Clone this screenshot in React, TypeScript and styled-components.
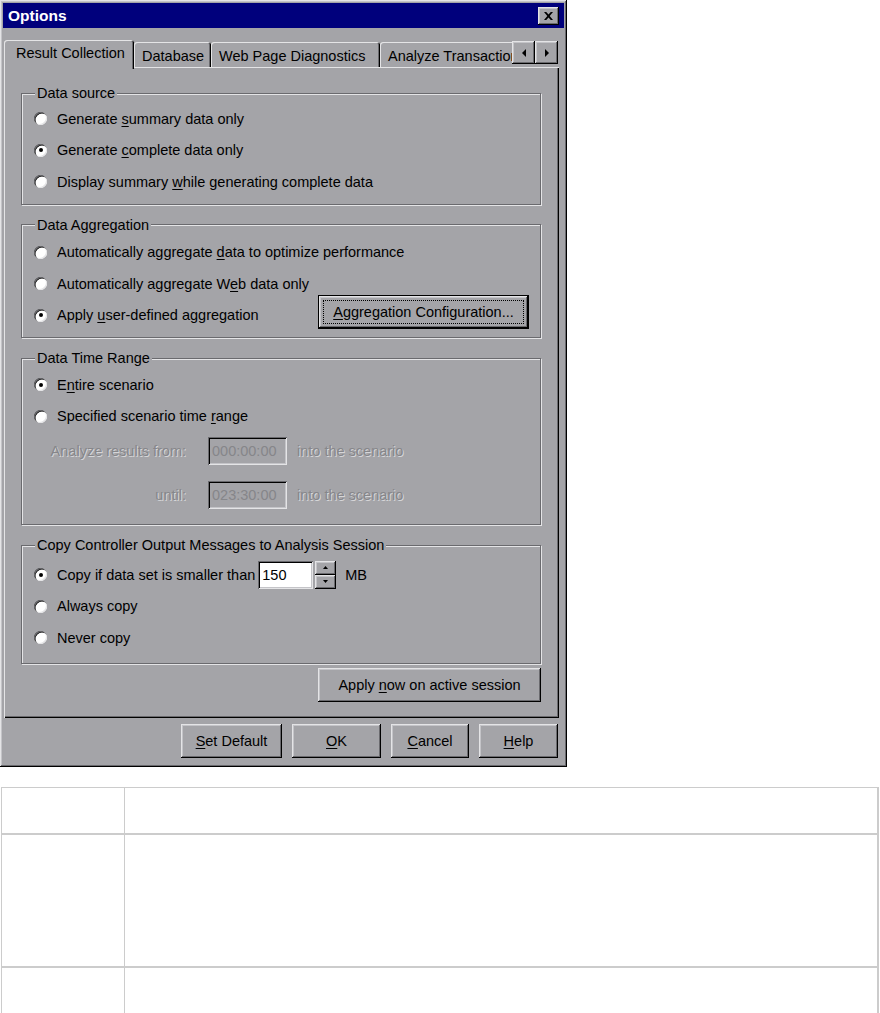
import React from "react";
import styled, { createGlobalStyle, css } from "styled-components";

const face = "#a4a4a8";
const hilite = "#e4e4e6";
const light = "#c4c4c8";
const shadow = "#6a6a6e";
const dark = "#000000";
const navy = "#00007c";

const GlobalStyle = createGlobalStyle`
  html, body {
    margin: 0;
    padding: 0;
    background: #ffffff;
  }
  body {
    font-family: "Liberation Sans", Arial, sans-serif;
    font-size: 14.5px;
    color: #000;
  }
  * {
    box-sizing: border-box;
  }
`;

const raised = css`
  box-shadow: inset -1px -1px 0 ${dark}, inset 1px 1px 0 ${hilite},
    inset -2px -2px 0 ${shadow}, inset 2px 2px 0 ${light};
`;

const sunken = css`
  box-shadow: inset 1px 1px 0 ${shadow}, inset -1px -1px 0 ${hilite},
    inset 2px 2px 0 ${dark}, inset -2px -2px 0 ${light};
`;

const Page = styled.div`
  display: flex;
  flex-direction: column;
  gap: 20px;
`;

const Window = styled.div`
  width: 567px;
  height: 767px;
  padding: 3px;
  background: ${face};
  ${raised};
  display: flex;
  flex-direction: column;
`;

const TitleBar = styled.div`
  flex: none;
  height: 25px;
  background: ${navy};
  display: flex;
  align-items: center;
  justify-content: space-between;
  padding: 0 5px;
`;

const Title = styled.span`
  color: #fff;
  font-weight: bold;
  font-size: 15.5px;
`;

const CloseButton = styled.button`
  width: 21px;
  height: 18px;
  padding: 0;
  border: 0;
  background: ${face};
  ${raised};
  display: flex;
  align-items: center;
  justify-content: center;
`;

const Body = styled.div`
  padding: 12px 5px 0 1px;
  display: flex;
  flex-direction: column;
`;

const TabStrip = styled.div`
  position: relative;
  z-index: 1;
  height: 27px;
  display: flex;
  align-items: flex-start;
`;

const TabsViewport = styled.div`
  width: 508px;
  height: 29px;
  overflow: hidden;
  display: flex;
  align-items: flex-end;
`;

const Tab = styled.div<{ $active?: boolean; $w: number }>`
  flex: none;
  width: ${(p) => p.$w}px;
  white-space: nowrap;
  display: flex;
  align-items: center;
  background: ${face};
  border-radius: 3px 3px 0 0;
  box-shadow: inset 1px 1px 0 ${hilite}, inset -1px 0 0 ${dark},
    inset -2px 0 0 ${shadow};
  ${(p) =>
    p.$active
      ? css`
          height: 29px;
          padding: 0 0 3px 12px;
        `
      : css`
          height: 25px;
          margin-bottom: 2px;
          padding: 3px 0 0 8px;
        `}
`;

const ScrollButton = styled.button`
  flex: none;
  width: 23px;
  height: 23px;
  margin-top: 1px;
  padding: 0;
  border: 0;
  background: ${face};
  ${raised};
  display: flex;
  align-items: center;
  justify-content: center;
`;

const Panel = styled.div`
  height: 651px;
  padding: 18px 18px 0 17px;
  background: ${face};
  box-shadow: inset 1px 1px 0 ${hilite}, inset -1px -1px 0 ${dark},
    inset -2px -2px 0 ${shadow};
  display: flex;
  flex-direction: column;
`;

const Group = styled.fieldset<{ $pt: number; $pb: number }>`
  margin: 0 0 12px;
  min-width: 0;
  padding: ${(p) => p.$pt}px 0 ${(p) => p.$pb}px 12px;
  border: 1px solid ${shadow};
  box-shadow: inset 1px 1px 0 ${hilite}, 1px 1px 0 ${hilite};
`;

const Legend = styled.legend`
  margin-left: 1px;
  padding: 0 2px;
  line-height: 16px;
  background: ${face};
`;

const Row = styled.div`
  height: 31.5px;
  display: flex;
  align-items: center;
  white-space: nowrap;
`;

const RadioMark = styled.span`
  flex: none;
  width: 13px;
  height: 13px;
  margin-right: 10px;
  border-radius: 50%;
  background: #fff;
  box-shadow: inset 1px 1px 0 ${shadow}, inset -1px -1px 0 ${hilite},
    inset 1.5px 1.5px 0 ${dark};
  display: flex;
  align-items: center;
  justify-content: center;
`;

const RadioDot = styled.span`
  width: 4px;
  height: 4px;
  border-radius: 50%;
  background: #000;
`;

const FieldRow = styled.div<{ $mt: number }>`
  margin-top: ${(p) => p.$mt}px;
  height: 28px;
  display: flex;
  align-items: center;
  white-space: nowrap;
`;

const DimText = styled.span<{ $w?: number }>`
  color: #86868a;
  text-shadow: 1px 1px 0 #d6d6d8;
  ${(p) =>
    p.$w &&
    css`
      width: ${p.$w}px;
      margin-right: 22px;
      text-align: right;
    `}
`;

const TimeBox = styled.div`
  width: 79px;
  height: 28px;
  margin-right: 10px;
  padding: 0 4px;
  display: flex;
  align-items: center;
  color: #86868a;
  background: ${face};
  ${sunken};
`;

const NumberBox = styled.div`
  width: 55px;
  height: 28px;
  margin-left: 3px;
  padding: 1px 4px 0;
  display: flex;
  align-items: center;
  background: #fff;
  ${sunken};
`;

const Spinner = styled.div`
  width: 21px;
  height: 28px;
  margin: 0 9px 0 2px;
  display: flex;
  flex-direction: column;
`;

const SpinButton = styled.div`
  flex: 1;
  background: ${face};
  ${raised};
  display: flex;
  align-items: center;
  justify-content: center;
`;

const PushButton = styled.button<{ $w: number; $default?: boolean }>`
  flex: none;
  width: ${(p) => p.$w}px;
  height: 34px;
  padding: 0;
  border: 0;
  font: inherit;
  color: #000;
  background: ${face};
  display: flex;
  align-items: center;
  justify-content: center;
  ${raised};
  ${(p) =>
    p.$default &&
    css`
      box-shadow: inset 0 0 0 1px ${dark}, inset -2px -2px 0 ${dark},
        inset 2px 2px 0 ${hilite}, inset -3px -3px 0 ${shadow},
        inset 3px 3px 0 ${light};
    `}
`;

const FocusRing = styled.span`
  width: calc(100% - 10px);
  height: calc(100% - 10px);
  border: 1px dotted #000;
  display: flex;
  align-items: center;
  justify-content: center;
`;

const ConfigButton = styled(PushButton)`
  margin: 0 11px 7px auto;
`;

const ApplyRow = styled.div`
  margin-top: -8px;
  display: flex;
  justify-content: flex-end;
`;

const ButtonRow = styled.div`
  margin-top: 6px;
  padding-right: 1px;
  display: flex;
  justify-content: flex-end;
  gap: 10px;
`;

const Key = styled.u`
  text-underline-offset: 2px;
`;

const InfoTable = styled.table`
  width: 878px;
  margin-left: 1px;
  border-collapse: separate;
  border-spacing: 0;
  border-top: 1px solid #cccccc;
  border-left: 1px solid #cccccc;
  border-right: 2px solid #cccccc;
`;

const Cell = styled.td<{ $h: number; $first?: boolean }>`
  box-sizing: content-box;
  height: ${(p) => p.$h}px;
  padding: 0;
  border-bottom: 2px solid #cccccc;
  ${(p) =>
    p.$first &&
    css`
      width: 122px;
      border-right: 1px solid #cccccc;
    `}
`;

const Radio = ({ checked, children }: { checked?: boolean; children: React.ReactNode }) => (
  <Row>
    <RadioMark>{checked && <RadioDot />}</RadioMark>
    <span>{children}</span>
  </Row>
);

const Arrow = ({ dir }: { dir: "left" | "right" | "up" | "down" }) => {
  const pts = {
    left: "4,0 4,8 0,4",
    right: "0,0 0,8 4,4",
    up: "0,3 5,3 2.5,0",
    down: "0,0 5,0 2.5,3",
  }[dir];
  const big = dir === "left" || dir === "right";
  return (
    <svg width={big ? 4 : 5} height={big ? 8 : 3} viewBox={big ? "0 0 4 8" : "0 0 5 3"}>
      <polygon points={pts} fill="#000" />
    </svg>
  );
};

const tabs = [
  { label: "Database", w: 77 },
  { label: "Web Page Diagnostics", w: 169 },
  { label: "Analyze Transactions", w: 150 },
];

export default function App() {
  return (
    <Page>
      <GlobalStyle />
      <Window>
        <TitleBar>
          <Title>Options</Title>
          <CloseButton>
            <svg width="9" height="8" viewBox="0 0 9 8">
              <path
                d="M0 0h2.2l2.3 2.6L6.8 0H9L5.7 4 9 8H6.8L4.5 5.4 2.2 8H0l3.3-4z"
                fill="#000"
              />
            </svg>
          </CloseButton>
        </TitleBar>
        <Body>
          <TabStrip>
            <TabsViewport>
              <Tab $active $w={130}>
                Result Collection
              </Tab>
              {tabs.map((t) => (
                <Tab key={t.label} $w={t.w}>
                  {t.label}
                </Tab>
              ))}
            </TabsViewport>
            <ScrollButton>
              <Arrow dir="left" />
            </ScrollButton>
            <ScrollButton>
              <Arrow dir="right" />
            </ScrollButton>
          </TabStrip>
          <Panel>
            <Group $pt={2} $pb={6}>
              <Legend>Data source</Legend>
              <Radio>
                Generate <Key>s</Key>ummary data only
              </Radio>
              <Radio checked>
                Generate <Key>c</Key>omplete data only
              </Radio>
              <Radio>
                Display summary <Key>w</Key>hile generating complete data
              </Radio>
            </Group>
            <Group $pt={4} $pb={6}>
              <Legend>Data Aggregation</Legend>
              <Radio>
                Automatically aggregate <Key>d</Key>ata to optimize performance
              </Radio>
              <Radio>
                Automatically aggregate W<Key>e</Key>b data only
              </Radio>
              <Row>
                <RadioMark>
                  <RadioDot />
                </RadioMark>
                <span>
                  Apply <Key>u</Key>ser-defined aggregation
                </span>
                <ConfigButton $w={211} $default>
                  <FocusRing>
                    <span>
                      <Key>A</Key>ggregation Configuration...
                    </span>
                  </FocusRing>
                </ConfigButton>
              </Row>
            </Group>
            <Group $pt={3} $pb={15}>
              <Legend>Data Time Range</Legend>
              <Radio checked>
                E<Key>n</Key>tire scenario
              </Radio>
              <Radio>
                Specified scenario time <Key>r</Key>ange
              </Radio>
              <FieldRow $mt={5}>
                <DimText $w={152}>Analyze results from:</DimText>
                <TimeBox>000:00:00</TimeBox>
                <DimText>into the scenario</DimText>
              </FieldRow>
              <FieldRow $mt={16}>
                <DimText $w={152}>until:</DimText>
                <TimeBox>023:30:00</TimeBox>
                <DimText>into the scenario</DimText>
              </FieldRow>
            </Group>
            <Group $pt={6} $pb={9.5}>
              <Legend>Copy Controller Output Messages to Analysis Session</Legend>
              <Row>
                <RadioMark>
                  <RadioDot />
                </RadioMark>
                <span>Copy if data set is smaller than</span>
                <NumberBox>150</NumberBox>
                <Spinner>
                  <SpinButton>
                    <Arrow dir="up" />
                  </SpinButton>
                  <SpinButton>
                    <Arrow dir="down" />
                  </SpinButton>
                </Spinner>
                <span>MB</span>
              </Row>
              <Radio>Always copy</Radio>
              <Radio>Never copy</Radio>
            </Group>
            <ApplyRow>
              <PushButton $w={223}>
                <span>
                  Apply <Key>n</Key>ow on active session
                </span>
              </PushButton>
            </ApplyRow>
          </Panel>
          <ButtonRow>
            <PushButton $w={101}>
              <span>
                <Key>S</Key>et Default
              </span>
            </PushButton>
            <PushButton $w={89}>
              <span>
                <Key>O</Key>K
              </span>
            </PushButton>
            <PushButton $w={78}>
              <span>
                <Key>C</Key>ancel
              </span>
            </PushButton>
            <PushButton $w={79}>
              <span>
                <Key>H</Key>elp
              </span>
            </PushButton>
          </ButtonRow>
        </Body>
      </Window>
      <InfoTable>
        <tbody>
          <tr>
            <Cell $h={45} $first />
            <Cell $h={45} />
          </tr>
          <tr>
            <Cell $h={131} $first />
            <Cell $h={131} />
          </tr>
          <tr>
            <Cell $h={45} $first />
            <Cell $h={45} />
          </tr>
        </tbody>
      </InfoTable>
    </Page>
  );
}
